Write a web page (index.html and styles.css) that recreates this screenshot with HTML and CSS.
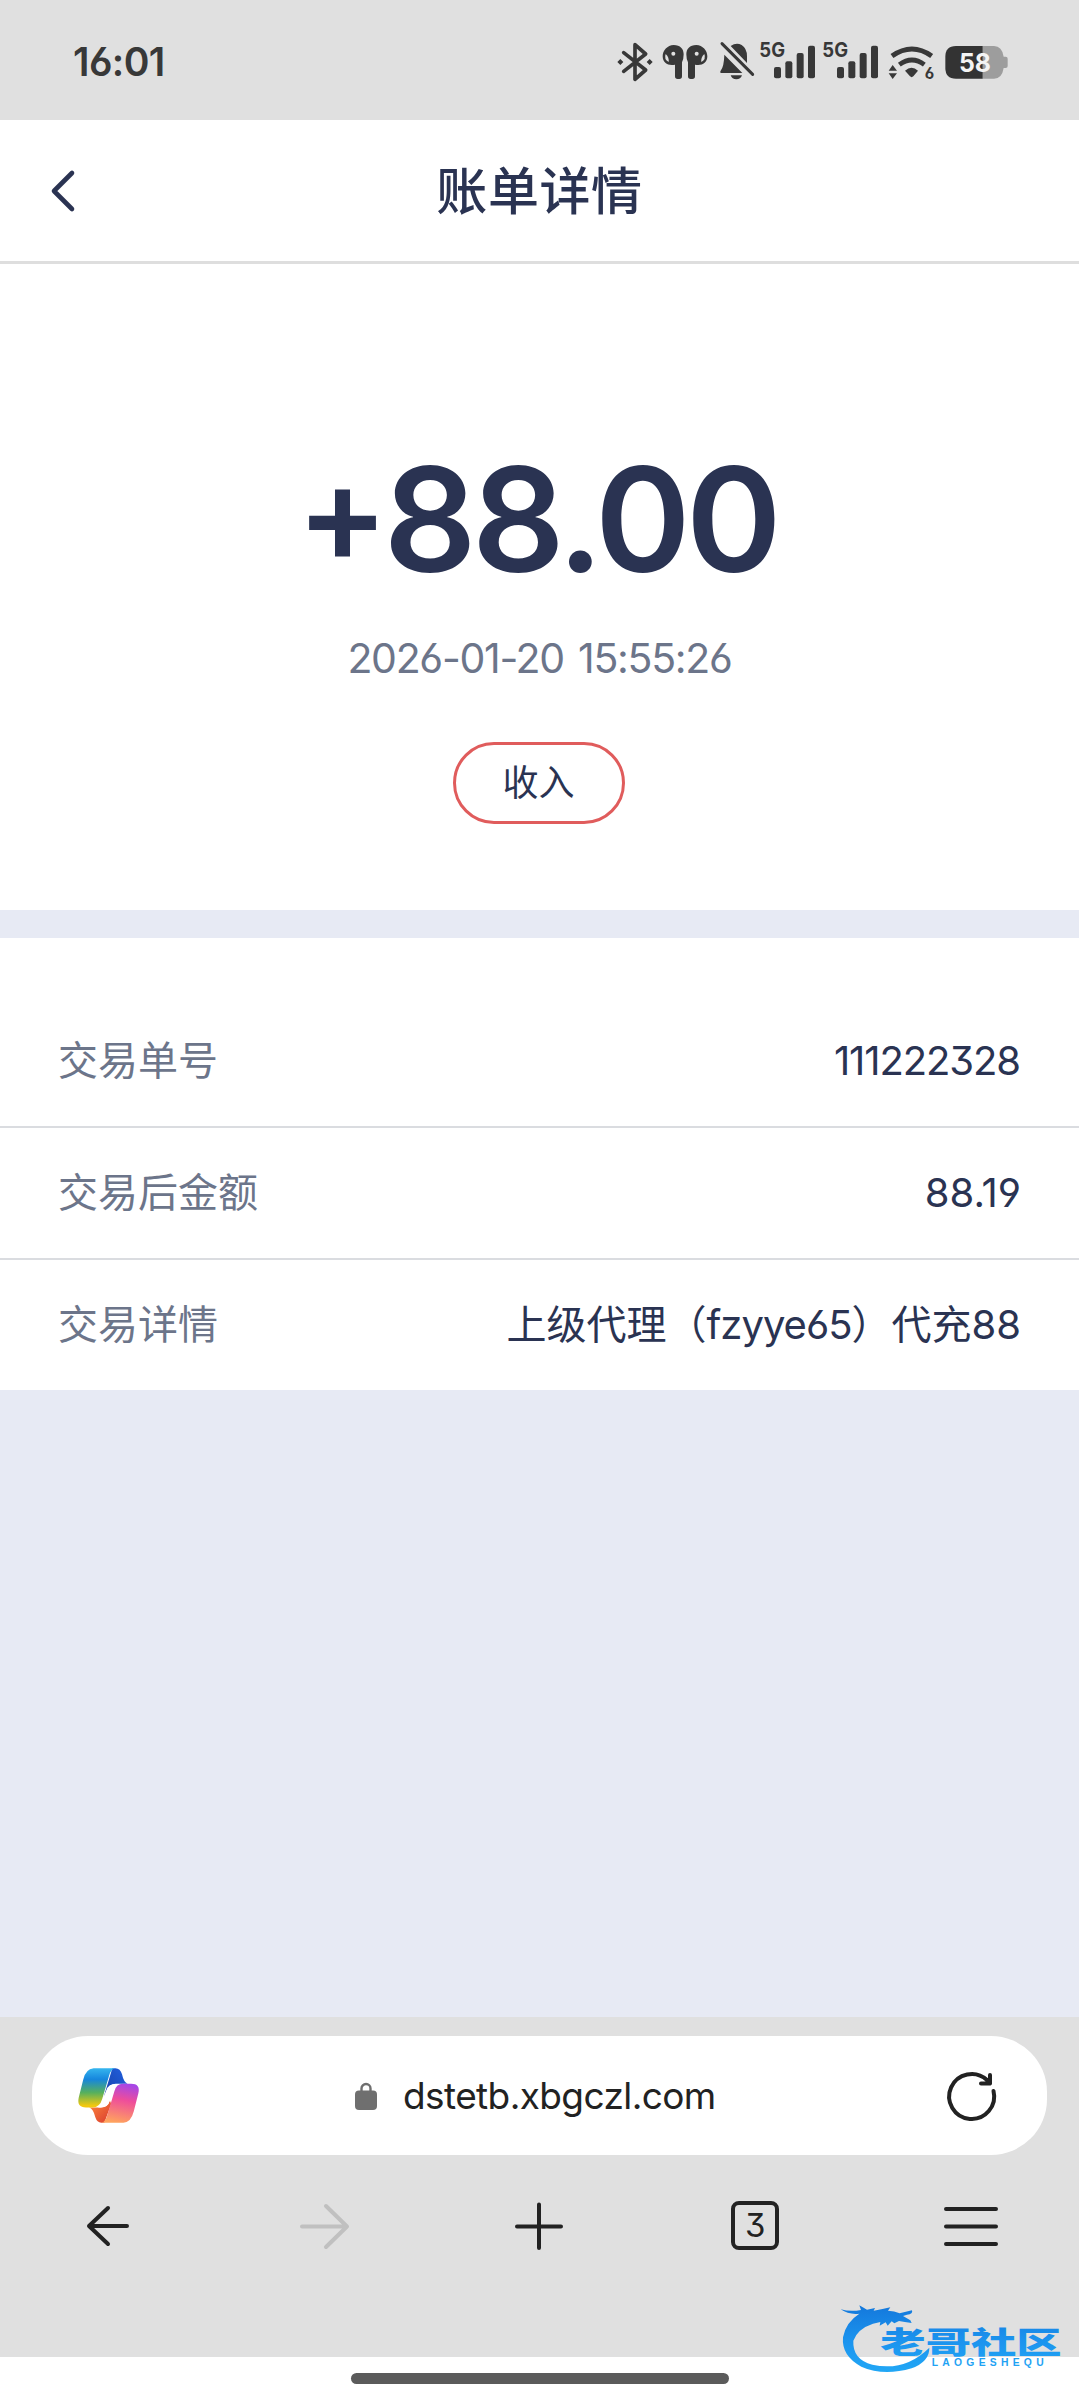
FILE: index.html
```html
<!DOCTYPE html>
<html lang="zh-CN">
<head>
  <meta charset="UTF-8">
  <title>账单详情</title>
  <meta name="viewport" content="width=device-width, initial-scale=1.0">
  <link rel="stylesheet" href="styles.css">
</head>
<body>
  <div class="status-bar">
    <span class="time">16:01</span>
    <div class="status-icons">
      <svg class="bluetooth" width="36" height="42" viewBox="50 60 108 126">
        <path d="M70 95L136 147L104 175V71L136 99L70 151" fill="none" stroke="#383838" stroke-width="11" stroke-linejoin="round" stroke-linecap="round"/>
        <path d="M51 123l9-9 9 9-9 9zM139 123l9-9 9 9-9 9z" fill="#383838"/>
      </svg>
      <svg class="buds" width="46" height="42" viewBox="185 60 138 126">
        <g id="bud" fill="#383838">
          <path d="M220 72C240 72 250 84 250 100Q250 114 245 124V166Q245 174 237 174H232Q224 174 224 166V131C205 136 187 126 187 106C187 88 201 73 220 72Z"/>
          <circle cx="219" cy="98" r="6" fill="#e0e0e0"/>
          <path d="M196 99Q190 115 205 123Q207 110 196 99Z" fill="#e0e0e0"/>
        </g>
        <use href="#bud" transform="matrix(-1 0 0 1 508 0)"/>
      </svg>
      <svg class="bell" width="36" height="42" viewBox="356 60 108 126">
        <path d="M391 75Q408 63 424 72Q440 82 440 106V126ZM372 101L426 156H365Q357 156 361 149Q371 137 372 101ZM391 163H425Q421 175 408 175Q395 175 391 163Z" fill="#383838"/>
        <path d="M365 68L457 160" stroke="#383838" stroke-width="9" stroke-linecap="round"/>
      </svg>
      <svg class="signal" width="58" height="52" viewBox="473 30 174 156">
        <text x="477" y="107" textLength="77" lengthAdjust="spacingAndGlyphs" class="net">5G</text>
        <g id="bars" fill="#383838">
          <rect x="521" y="138" width="21" height="34" rx="6"/>
          <rect x="555" y="121" width="21" height="51" rx="6"/>
          <rect x="589" y="96" width="21" height="76" rx="6"/>
          <rect x="623" y="74" width="21" height="98" rx="6"/>
        </g>
      </svg>
      <svg class="signal signal-two" width="58" height="52" viewBox="473 30 174 156">
        <text x="477" y="107" textLength="77" lengthAdjust="spacingAndGlyphs" class="net">5G</text>
        <use href="#bars"/>
      </svg>
      <svg class="wifi" width="46" height="42" viewBox="864 60 138 126">
        <path d="M876 105Q936 63 995 105" fill="none" stroke="#383838" stroke-width="15"/>
        <path d="M898 131Q936 103 973 131" fill="none" stroke="#383838" stroke-width="14"/>
        <path d="M915 149Q935 132 954 149L940 166Q935 171 930 166ZM866 149L878 132L891 149ZM866 157L878 174L891 157Z" fill="#383838"/>
        <text x="974" y="175" class="six">6</text>
      </svg>
      <svg class="battery" width="63" height="42" viewBox="1035 60 189 126">
        <path d="M1148 75H1182Q1206 75 1211 107H1217Q1223 107 1223 113V135Q1223 141 1217 141H1211Q1206 173 1182 173H1148Z" fill="#9d9d9d"/>
        <path d="M1148 75H1068Q1036 75 1036 107V141Q1036 173 1068 173H1148Z" fill="#333"/>
        <text x="1077" y="154" textLength="96" lengthAdjust="spacingAndGlyphs" class="level">58</text>
      </svg>
    </div>
  </div>

  <div class="header">
    <svg class="back" width="24" height="42" viewBox="0 0 24 42"><path d="M21 3L3 21L21 39" fill="none" stroke="#2a3352" stroke-width="4.6" stroke-linecap="round" stroke-linejoin="round"/></svg>
    <h1>账单详情</h1>
  </div>

  <div class="summary">
    <div class="amount"><span class="sign">+</span>88.00</div>
    <div class="date">2026-01-20 15:55:26</div>
    <div class="type">收入</div>
  </div>

  <div class="details">
    <div class="row"><span class="label">交易单号</span><span class="value order">111222328</span></div>
    <div class="row"><span class="label">交易后金额</span><span class="value">88.19</span></div>
    <div class="row"><span class="label">交易详情</span><span class="value note">上级代理（<span class="user">fzyye65</span>）代充88</span></div>
  </div>

  <div class="browser">
    <div class="address">
      <svg class="copilot" width="61" height="55" viewBox="226 203 176 164" preserveAspectRatio="none">
        <defs>
          <linearGradient id="g1" x1="0" y1="0" x2="0" y2="1">
            <stop offset="0" stop-color="#35b5ee"/>
            <stop offset=".28" stop-color="#1686dd"/>
            <stop offset=".62" stop-color="#56b05d"/>
            <stop offset=".95" stop-color="#f2c80f"/>
          </linearGradient>
          <linearGradient id="g2" x1=".6" y1="0" x2=".4" y2="1">
            <stop offset="0" stop-color="#a646e6"/>
            <stop offset=".4" stop-color="#ee4d9b"/>
            <stop offset="1" stop-color="#ffa35e"/>
          </linearGradient>
          <linearGradient id="g3" x1="0" y1="1" x2="1" y2="0">
            <stop offset="0" stop-color="#1540a8"/>
            <stop offset="1" stop-color="#2261e0"/>
          </linearGradient>
          <linearGradient id="g4" x1="0" y1="0" x2="1" y2="1">
            <stop offset="0" stop-color="#ff8a3c"/>
            <stop offset="1" stop-color="#d93a2f"/>
          </linearGradient>
        </defs>
        <path d="M325 204H334Q348 204 353 222Q358 246 369 250H335Q314 250 308 270L300 290Z" fill="url(#g3)"/>
        <path d="M302 366H293Q281 366 276 350Q270 324 258 321H292Q312 321 318 300L322 310Z" fill="url(#g4)"/>
        <path d="M345 251H337Q314 251 308 270L296 303Q292 320 282 321H292Q312 321 318 300L340 262Z" fill="#fff"/>
        <path d="M271 204H333Q321 205 315 228L296 295Q289 321 268 321H249Q222 321 228 292L241 238Q248 206 271 204Z" fill="url(#g1)"/>
        <path d="M357 366H294Q305 365 311 342L331 272Q337 250 355 250H379Q407 250 400 279L387 332Q379 365 357 366Z" fill="url(#g2)"/>
      </svg>
      <div class="site">
        <svg width="22" height="28" viewBox="0 0 22 28">
          <path d="M6.5 10V6.5a4.5 4.5 0 0 1 9 0V10" fill="none" stroke="#6f6f6f" stroke-width="2.4"/>
          <rect y="8.500" width="22" height="19.500" rx="4" fill="#6f6f6f"/>
        </svg>
        <span class="url">dstetb.xbgczl.com</span>
      </div>
      <svg class="reload" width="50" height="50" viewBox="0 0 50 50" fill="none" stroke="#222" stroke-width="4" stroke-linecap="round" stroke-linejoin="round">
        <path d="M47.500 20A22.500 22.500 0 1 1 41 9L44 12.500M44 4V12.500H35"/>
      </svg>
    </div>
    <div class="nav">
      <svg width="50" height="50" viewBox="0 0 50 50"><path d="M25 7L6 25L25 43M6 25H44"/></svg>
      <svg class="off" width="50" height="50" viewBox="0 0 50 50"><path d="M27 5L48 25.500L27 46M48 25.500H3"/></svg>
      <svg width="50" height="50" viewBox="0 0 50 50"><path d="M25 3.500V47M3 25.500H47"/></svg>
      <div class="tabs">3</div>
      <svg width="54" height="50" viewBox="0 0 54 50"><path d="M2 8H52M2 25.500H52M2 43H52"/></svg>
    </div>
  </div>

  <div class="home"><div class="home-bar"></div></div>

  <svg class="watermark" width="226" height="76" viewBox="58 72 678 228">
    <defs>
      <linearGradient id="wm" x1="0" y1="80" x2="0" y2="280" gradientUnits="userSpaceOnUse">
        <stop offset="0" stop-color="#1479dc"/>
        <stop offset=".5" stop-color="#1b93ee"/>
        <stop offset="1" stop-color="#22a8f6"/>
      </linearGradient>
    </defs>
    <g fill="url(#wm)">
      <path d="M63 88Q92 96 124 90L119 76L142 89L166 84L162 92Q190 88 212 82L205 92Q224 93 240 100L277 91Q281 103 262 104L250 108L272 121L276 129Q254 126 238 123L224 130L216 124L204 137L198 127L180 137L182 126L160 131Q114 146 101 182Q98 238 158 254Q255 276 329 203Q330 244 276 265Q191 290 125 260Q65 228 70 172Q78 127 119 101Q88 105 63 88Z"/>
      <text x="182" y="220" textLength="544" lengthAdjust="spacingAndGlyphs" class="wm-name">老哥社区</text>
      <text x="336" y="259" textLength="336" class="wm-sub">LAOGESHEQU</text>
    </g>
  </svg>
</body>
</html>
```
FILE: styles.css
```css
* { box-sizing: border-box; }
body {
  margin: 0;
  height: 2400px;
  display: flex;
  flex-direction: column;
  position: relative;
  background-color: #e7eaf4;
  color: #2a3352;
  font-family: Inter, "Noto Sans CJK SC", sans-serif;
  font-feature-settings: "ss01", "cv09", "cv03", "cv04";
}
svg { display: block; flex: none; overflow: visible; }

.status-bar {
  height: 120px;
  padding: 2px 71px 0 73px;
  display: flex;
  align-items: center;
  justify-content: space-between;
  background-color: #e0e0e0;
}
.time { font-size: 39px; font-weight: 600; color: #383838; letter-spacing: -0.6px; }
.status-icons { display: flex; align-items: flex-end; padding-bottom: 8px; }
.buds { margin-left: 9px; }
.bell { margin-left: 11px; }
.signal { margin-left: 3px; }
.signal-two { margin-left: 5px; }
.wifi { margin-left: 9px; }
.battery { margin-left: 11px; }
.net { font-size: 60px; font-weight: 700; fill: #383838; }
.six { font-size: 46px; font-weight: 700; fill: #383838; }
.level { font-size: 78px; font-weight: 700; fill: #f4f4f4; }

.header {
  height: 144px;
  padding: 0 51px;
  display: flex;
  align-items: center;
  background-color: #fff;
  border-bottom: 3px solid #dedede;
}
.header h1 {
  flex: 1;
  margin: 2px 24px 0 0;
  text-align: center;
  font-size: 51px;
  line-height: 60px;
  font-weight: 500;
  letter-spacing: 0.6px;
}

.summary {
  height: 646px;
  padding-top: 166px;
  display: flex;
  flex-direction: column;
  align-items: center;
  background-color: #fff;
}
.amount {
  height: 180px;
  margin-right: 5px;
  font-size: 145px;
  line-height: 180px;
  font-weight: 600;
  letter-spacing: -4.5px;
  font-feature-settings: "case";
}
.sign { font-size: 136px; line-height: 1; }
.date { margin-top: 23px; font-size: 41px; line-height: 50px; color: #6c758a; letter-spacing: -1.3px; word-spacing: 4px; }
.type {
  width: 172px;
  height: 82px;
  margin-top: 59px;
  margin-right: 2px;
  border: 3px solid #e05c5c;
  border-radius: 41px;
  font-size: 36px;
  line-height: 76px;
  text-align: center;
}

.details { margin-top: 28px; padding-top: 58px; background-color: #fff; }
.row {
  height: 132px;
  padding: 0 58px;
  display: flex;
  align-items: center;
  justify-content: space-between;
  border-bottom: 2px solid #dadce0;
  font-size: 40px;
}
.row:last-child { height: 130px; border-bottom: 0; }
.label { padding-bottom: 6px; color: #6c758a; }
.value { padding-bottom: 2px; }
.order { margin-right: 1px; letter-spacing: -1.1px; }
.note { padding-bottom: 6px; }
.user { letter-spacing: -1px; }

.browser { height: 340px; margin-top: auto; padding: 19px 32px 0; background-color: #e0e0e0; }
.address {
  height: 119px;
  padding: 0 51px 0 46px;
  display: flex;
  align-items: center;
  background-color: #fff;
  border-radius: 56px;
}
.site { display: flex; align-items: center; margin-left: 216px; }
.url { margin-left: 26px; font-size: 37px; color: #222; letter-spacing: -0.6px; }
.reload { margin-left: auto; }
.nav {
  height: 141px;
  margin: 0 -32px;
  display: grid;
  grid-template-columns: repeat(5, 1fr);
  align-items: center;
  justify-items: center;
}
.nav path { fill: none; stroke: #222; stroke-width: 4; stroke-linecap: round; stroke-linejoin: round; }
.nav .off path { stroke: #c0c0c0; }
.tabs {
  width: 48px;
  height: 49px;
  border: 4px solid #222;
  border-radius: 8px;
  color: #222;
  font-size: 33px;
  line-height: 41px;
  text-align: center;
}

.home { height: 43px; padding-top: 16px; background-color: #fff; }
.home-bar { width: 378px; height: 11px; margin: 0 auto; border-radius: 6px; background-color: #5b5b5b; }

.watermark { position: absolute; left: 839px; top: 2304px; }
.wm-name { font-family: "Noto Sans CJK SC", sans-serif; font-size: 90px; font-weight: 900; }
.wm-sub { font-family: "Liberation Sans", sans-serif; font-size: 31px; font-weight: 700; }
```
